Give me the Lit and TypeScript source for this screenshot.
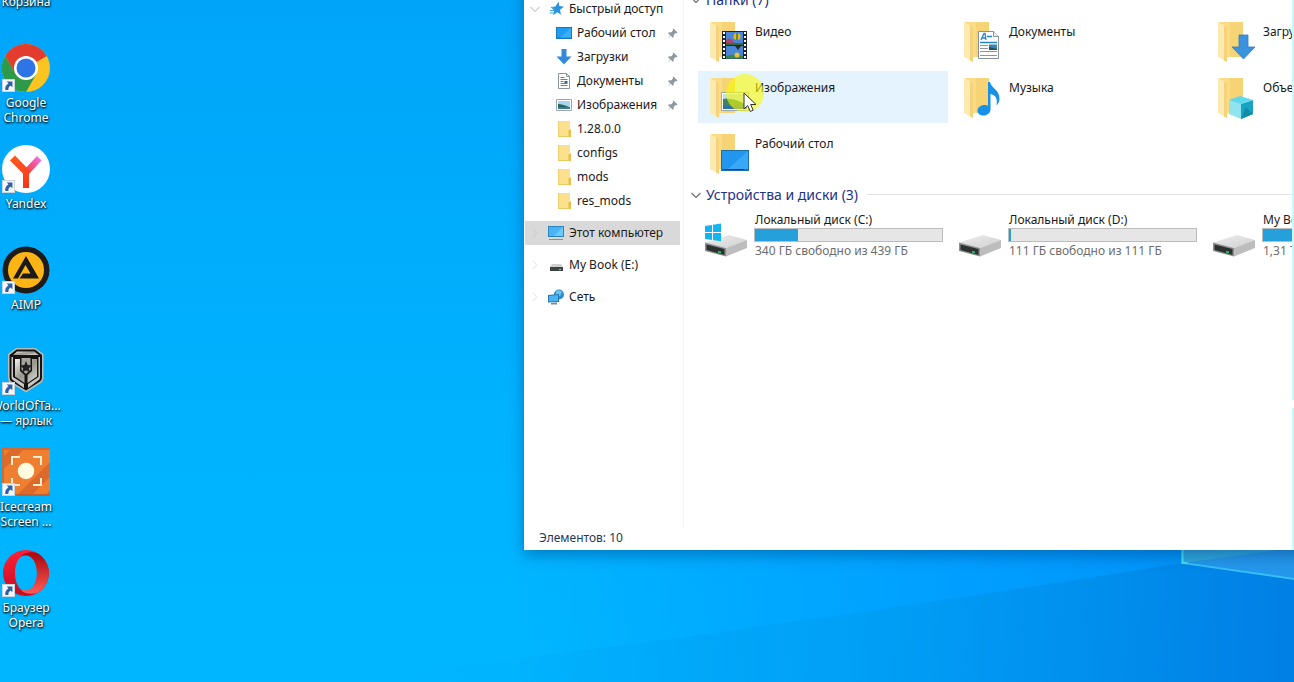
import { LitElement, html, svg, css, nothing, TemplateResult } from "lit";
import { customElement, property } from "lit/decorators.js";

type Art = TemplateResult;

const shortcutArrow = html`<svg class="arrow" viewBox="0 0 13 13" aria-hidden="true">
  <rect x=".5" y=".5" width="12" height="12" fill="#f4f6f8" stroke="#c9d4dc"/>
  <path d="M4.600 2.400h5.800v5.800L8.500 6.400C6.800 7.800 6.200 9 6.400 11H3.400C2.800 8.400 3.900 6.200 6.500 4.300z" fill="#2f5da8"/>
</svg>`;

const desktopArt: Record<string, Art> = {
  bin: html`<svg viewBox="0 0 48 48"><path d="M10 8h28l-4 36H14z" fill="#eef4f8" stroke="#9ab"/></svg>`,
  chrome: html`<svg viewBox="0 0 48 48">
    <circle cx="24" cy="24" r="24" fill="#fcc421"/>
    <path d="M24 24 3.200 12A24 24 0 0 1 44.800 12z" fill="#e33b2e"/>
    <path d="M3.200 12 13.600 30 24 24V12z" fill="#e33b2e"/>
    <path d="M3.200 12A24 24 0 0 0 24 48l10.400-18H13.600z" fill="#2c9a48"/>
    <circle cx="24" cy="24" r="12" fill="#fff"/><circle cx="24" cy="24" r="9.500" fill="#2f74e6"/>
  </svg>`,
  yandex: html`<svg viewBox="0 0 48 48">
    <defs>
      <linearGradient id="ya" x1="0" y1="0" x2="0" y2="1"><stop offset="0" stop-color="#ff5a1e"/><stop offset="1" stop-color="#f7331c"/></linearGradient>
      <linearGradient id="yb" x1="0" y1="1" x2="1" y2="0"><stop offset=".1" stop-color="#fb3f2d"/><stop offset=".6" stop-color="#f655a5"/><stop offset="1" stop-color="#e67cf5"/></linearGradient>
    </defs>
    <circle cx="24" cy="24" r="24" fill="#fff"/>
    <path d="M21 26 35 11l4.500 4.500L27 29z" fill="url(#yb)"/>
    <path d="M13 10.500 8 15.500l13 13V43h6V25z" fill="url(#ya)"/>
  </svg>`,
  aimp: html`<svg viewBox="0 0 48 48">
    <circle cx="24" cy="24" r="23.500" fill="#1d1c1a"/><circle cx="24" cy="24" r="18" fill="#fdb515"/>
    <path d="M24 10 37 32.500H17.500l3.500-5h7.500L23.500 19 16 32.500h-5z" fill="#1b1a18"/>
  </svg>`,
  tanks: html`<svg viewBox="0 0 48 48">
    <defs><linearGradient id="wt" x1="0" y1="0" x2="1" y2="1"><stop offset="0" stop-color="#f4f3ef"/><stop offset=".5" stop-color="#99968f"/><stop offset="1" stop-color="#dedcd6"/></linearGradient></defs>
    <path d="M14 1 6 7v24q0 3 2.500 5L24 45.500 39 36q2.500-2 2.500-5V7l-8-6z" fill="#b9bbb9"/>
    <path d="M14.500 2.500 7.500 8v22.500q0 2.500 2 4L24 43.500l14-9q2-1.500 2-4V8l-7-5.500z" fill="#141414"/>
    <path d="M15 4.500h17.500l4 3.500H11z" fill="url(#wt)"/>
    <path d="M9.500 10h1.500v20l11 7v4L11.500 33.500q-2-1-2-3z M38 10h-1.500v20L26 37v4l10-7.500q2-1 2-3z" fill="#c9c7c1"/>
    <path d="M13 12h5v12l4.500 4v8L13 29.500z M35 12h-5v12l-4.500 4v8l9.500-6.500z" fill="url(#wt)"/>
    <path d="M19.500 11h9v12L24 27l-4.500-4z" fill="#a5a39e"/>
    <path d="M24 14l1.700 4 4.300.4-3.200 2.900 1 4.200L24 23.300l-3.800 2.200 1-4.200-3.200-2.900 4.300-.4z" fill="#22211f"/>
  </svg>`,
  icecream: html`<svg viewBox="0 0 48 48">
    <path d="M0 0h48v48H0z" fill="#ef7e30"/>
    <path d="M10 0h13L0 23V10z M48 14v15L29 48H14z M48 42v6h-5z" fill="#dc6a2c"/>
    <path d="M0 0h48v2H2v46H0z" fill="#d36b30"/><path d="M0 46h48v2H0z" fill="#c95f28"/>
    <path d="M10 17V9h8M31 9h8v8M39 30v7h-8M18 37h-8v-7" fill="none" stroke="#fdeec9" stroke-width="2"/>
    <circle cx="24" cy="23" r="8.300" fill="#fffbe0"/>
  </svg>`,
  opera: html`<svg viewBox="0 0 48 48">
    <defs>
      <linearGradient id="oa" x1="0" y1="0" x2="0" y2="1"><stop offset="0" stop-color="#ff2038"/><stop offset="1" stop-color="#c50c20"/></linearGradient>
      <linearGradient id="ob" x1="0" y1="0" x2="0" y2="1"><stop offset="0" stop-color="#a6050e"/><stop offset="1" stop-color="#ff5a55"/></linearGradient>
    </defs>
    <path fill-rule="evenodd" d="M24 1a23 23 0 1 0 0 46 23 23 0 0 0 0-46zm0 5c7 0 11 8 11 18s-4 18-11 18-11-8-11-18S17 6 24 6z" fill="url(#oa)"/>
    <path d="M18 8c4-5 12-6 18-3.500A23 23 0 0 1 36 43.500C30 46 22 45 18 40c10 5 17-4 17-16S28 3 18 8z" fill="url(#ob)"/>
  </svg>`,
};

const smallFolder = html`<svg viewBox="0 0 16 16"><path d="M2 0h12v15H2z" fill="#fbe08d"/><path d="M2 0h1v15H2z" fill="#f1cf72"/><path d="M12.500 9l2.500-.5V16h-2.500z" fill="#e8bd4f"/><path d="M2 15h11v1H2z" fill="#ecc963"/></svg>`;

const navArt: Record<string, Art> = {
  star: html`<svg viewBox="0 0 16 16"><path d="M10.500.500 11.300 5l4.700.8-4 3 1 5L9.400 11.300l-4.400 3 1.200-5L2.500 6l5-.4z" fill="#2b93e0"/><path d="M2 9.500h4M1.500 12h4M3 6.500h3" stroke="#4aa9ea" stroke-width="1"/></svg>`,
  desktop: html`<svg viewBox="0 0 16 16"><path d="M0 2h16v12H0z" fill="#1675c4"/><path d="M1 3h14v9.500H1z" fill="#1d9cf2"/><path d="M15 3v9.500H4z" fill="#38adf8"/></svg>`,
  download: html`<svg viewBox="0 0 16 16"><path d="M5.500 0h5v7.500H15.500L8 15.500.5 7.500h5z" fill="#338ada"/></svg>`,
  doc: html`<svg viewBox="0 0 16 16"><path d="M2.500.5h8l3 3v12h-11z" fill="#fff" stroke="#8b969c"/><path d="M10.500.5v3h3" fill="none" stroke="#8b969c"/><path d="M4.500 4.500h4M4.500 6.500h7M4.500 8.500h3M4.500 10.500h7M4.500 12.500h7" stroke="#3d90c5"/><path d="M8.500 8h3v2h-3z" fill="#24688e"/></svg>`,
  picture: html`<svg viewBox="0 0 16 16"><path d="M.5 2.500h15v11H.5z" fill="#fff" stroke="#9ca5ab"/><path d="M2 4h12v8H2z" fill="#a9d6ef"/><path d="M2 7q5 0 12 3.500V12H2z" fill="#24645f"/><path d="M2 10h12v2H2z" fill="#3a78a2"/></svg>`,
  folder: smallFolder,
  computer: html`<svg viewBox="0 0 16 16"><path d="M0 1h16v11H0z" fill="#2c82bd"/><path d="M1 2h14v9H1z" fill="#48b6f5"/><path d="M15 2v9H6z" fill="#6bcaff"/><path d="M1 14h14v1H1z" fill="#7f9099"/></svg>`,
  drive: html`<svg viewBox="0 0 16 16"><path d="M4 7h9l2 3H2z" fill="#d0d0d0"/><path d="M2 10h13v4H2z" fill="#3f4443"/><path d="M11 12h2v1h-2z" fill="#75d28b"/></svg>`,
  network: html`<svg viewBox="0 0 16 16"><circle cx="11" cy="5.500" r="5" fill="#2d8fce"/><path d="M8 2q4-2 6 1l-2 4-4-1z" fill="#6ec4ea"/><path d="M0 6l11-1v8L0 13.500z" fill="#2279b5"/><path d="M1 7l9-1v6l-9 .5z" fill="#48b4f3"/><path d="M3 14l6-.5v2L3 15.500z" fill="#738c99"/></svg>`,
};

const pin = html`<svg class="pin" viewBox="0 0 12 12" aria-hidden="true"><path d="M7 .5 11.500 5l-1.200.7-.9-.3L7.200 7.600l.1 2.100-1 .9L4 8.300.5 11.500 3.500 7.800 1.200 5.600l1-.9 2.200.1 2.200-2.200-.3-.9z" fill="#8c979f"/></svg>`;

const chevron = (open: boolean, tone: string) => html`<svg class="chevron" viewBox="0 0 10 10" aria-hidden="true">
  <path d=${open ? "M.5 3l4.500 4.500L9.500 3" : "M3 1l4 4-4 4"} fill="none" stroke=${tone} stroke-width="1.200"/>
</svg>`;

const folderBase = svg`
  <path d="M5 5h24v35H5z" fill="#f9dc85"/>
  <path d="M16 5h13v35H16z" fill="#f6d476"/>
  <path d="M4 5l9 5v35l-9-5z" fill="#fdeab0"/>
  <path d="M10 8.500 13 10v35l-3-1.500z" fill="#f5d27b"/>`;

const folderArt: Record<string, unknown> = {
  video: svg`<path d="M16 14h25v28H16z" fill="#20242c"/><path d="M20 15h17v13H20zM20 29h17v12.500H20z" fill="#4a86d6"/>
    <path d="M20 23q3-3 6 0t4 5H20z" fill="#a8476b"/><path d="M20 26h17v2H20z" fill="#356b3c"/><path d="M20 39q8-3 17 0v2.500H20z" fill="#3b8644"/>
    <circle cx="31" cy="19.500" r="3.500" fill="#e9b62b"/><path d="M30 16h2v7h-2z" fill="#5d8f2a"/>
    <circle cx="31" cy="38" r="2.500" fill="#dfc63c"/><path d="M29 29h6l-3 4z" fill="#272c30"/>
    <path d="M18 15v27M39 15v27" stroke="#fff" stroke-width="2" stroke-dasharray="2 2"/>`,
  pictures: svg`<path d="M15.500 19.500h27v18h-27z" fill="#fff" stroke="#9ca8ae"/><path d="M17 21h24v15H17z" fill="#b9dff5"/>
    <path d="M17 26q9-2 24 6v4H17z" fill="#3c8564"/><path d="M17 32q12 2 24 0v4H17z" fill="#2f71a1"/>`,
  desktop: svg`<path d="M15 21h28v21H15z" fill="#1b6fab"/><path d="M16 22h26v18H16z" fill="#2196ef"/><path d="M42 22v18H22z" fill="#39a8f7"/><path d="M18 40.500h20" stroke="#153f66"/>`,
  documents: svg`<path d="M18.500 14.500h15l5 5v22h-20z" fill="#fff" stroke="#87919a"/><path d="M33.500 14.500v5h5" fill="#eef2f5" stroke="#87919a"/>
    <path d="M21 23l3-6.500h1l1 6.500M22.500 21h3.500" fill="none" stroke="#2485c9" stroke-width="1.300"/><path d="M27 19.500h5M20 25.500h17" stroke="#2485c9" stroke-width="1.300"/>
    <path d="M20 28.500h8M20 31.500h8M20 34.500h17M20 38.500h17" stroke="#8c969c"/><path d="M29 27.500h8V33h-8z" fill="#3c82b4"/><path d="M29 30l8 2v1h-8z" fill="#274e58"/>`,
  music: svg`<path d="M28 9h2c1 6 10 8 9.500 17-.2 3-1.500 5-3 6.500C38 25 35 22 30.500 21v15.500c0 3.500-3.500 6-7 6s-6-2-6-5 3.500-5.500 7-5.500c1.500 0 2.500.2 3.500.7z" fill="#1790e8"/>`,
  downloads: svg`<path d="M25 18h9v12h7L29.500 42 18 30h7z" fill="#3b93df" stroke="#2f7fc6" stroke-width=".8"/>`,
  objects: svg`<path d="M15 27l12 4v15l-12-5z" fill="#8fe4ee"/><path d="M27 31l12-4v14l-12 5z" fill="#18a2c4"/><path d="M15 27l11-4 13 4-12 4z" fill="#5fd9ef"/><path d="M27 46l12-5-7-7z" fill="#138ba8"/>`,
};

const driveArt = (system: boolean) => html`<svg viewBox="0 0 48 48" aria-hidden="true">
  <defs><linearGradient id="dt" x1="0" y1="0" x2="1" y2="1"><stop offset="0" stop-color="#eeeeee"/><stop offset="1" stop-color="#cfcfcf"/></linearGradient></defs>
  <path d="M1 29.500 25 22l18 5-21 8z" fill="url(#dt)"/>
  <path d="M22 35l21-8v8L22 43.500z" fill="#bdbdbd"/>
  <path d="M1 29.500 22 35v8.500L1 38z" fill="#8e9090"/>
  <path d="M2.500 31.500 20.500 36v6L2.500 37z" fill="#2d3130"/>
  <path d="M14 38l3 .8v1.500l-3-.8z" fill="#43cf77"/>
  ${system ? svg`<path d="M1 13l7-1v7H1zM9 11.800 17 10.500V19H9zM1 20h7v7l-7-1zM9 20h8v8.200L9 27z" fill="#12b5ef"/>` : nothing}
</svg>`;

@customElement("desktop-shortcut")
class DesktopShortcut extends LitElement {
  @property() icon = "";
  @property() label = "";

  static styles = css`
    :host { display: block; height: 101px; }
    .shortcut {
      display: flex; flex-direction: column; align-items: center; gap: 3px; width: 100%;
      padding: 0; border: 0; background: none; color: #fff;
      font: 12px/15px "Noto Sans", "Open Sans", sans-serif;
      text-shadow: 0 1px 2px rgba(0, 0, 0, .9), 1px 1px 2px rgba(0, 0, 0, .7);
    }
    .picture { position: relative; display: block; width: 48px; height: 48px; }
    .picture svg { display: block; width: 100%; height: 100%; }
    .picture .arrow { position: absolute; left: 0; bottom: 0; width: 13px; height: 13px; }
    .label { white-space: pre-line; text-align: center; }
  `;

  render() {
    return html`<button class="shortcut" type="button">
      <span class="picture">${desktopArt[this.icon]}${this.icon === "bin" ? nothing : shortcutArrow}</span>
      <span class="label">${this.label}</span>
    </button>`;
  }
}

interface NavItem { icon: string; label: string; level?: number; pinned?: boolean; open?: boolean; current?: boolean; }

const navGroups: NavItem[][] = [
  [
    { icon: "star", label: "Быстрый доступ", open: true },
    { icon: "desktop", label: "Рабочий стол", level: 1, pinned: true },
    { icon: "download", label: "Загрузки", level: 1, pinned: true },
    { icon: "doc", label: "Документы", level: 1, pinned: true },
    { icon: "picture", label: "Изображения", level: 1, pinned: true },
    { icon: "folder", label: "1.28.0.0", level: 1 },
    { icon: "folder", label: "configs", level: 1 },
    { icon: "folder", label: "mods", level: 1 },
    { icon: "folder", label: "res_mods", level: 1 },
  ],
  [{ icon: "computer", label: "Этот компьютер", current: true }],
  [{ icon: "drive", label: "My Book (E:)" }],
  [{ icon: "network", label: "Сеть" }],
];

const folders = [
  { icon: "video", label: "Видео" },
  { icon: "documents", label: "Документы" },
  { icon: "downloads", label: "Загрузки" },
  { icon: "pictures", label: "Изображения", hover: true },
  { icon: "music", label: "Музыка" },
  { icon: "objects", label: "Объемные объекты" },
  { icon: "desktop", label: "Рабочий стол" },
];

const drives = [
  { label: "Локальный диск (C:)", space: "340 ГБ свободно из 439 ГБ", used: 23, system: true },
  { label: "Локальный диск (D:)", space: "111 ГБ свободно из 111 ГБ", used: 1, system: false },
  { label: "My Book (E:)", space: "1,31 ТБ свободно из 3,63 ТБ", used: 64, system: false },
];

@customElement("explorer-window")
class ExplorerWindow extends LitElement {
  static styles = css`
    :host {
      display: flex; flex-direction: column; box-sizing: border-box; background: #fff; color: #1a1a1a;
      font: 12px/16px "Noto Sans", "Open Sans", sans-serif;
      box-shadow: -1px 0 0 #1a86cc, 0 5px 14px rgba(0, 40, 100, .4);
    }
    button { border: 0; margin: 0; background: none; color: inherit; font: inherit; text-align: left; }
    svg { display: block; flex: none; }
    .body { display: flex; flex: 1; }
    .nav { display: flex; flex: none; flex-direction: column; gap: 8px; width: 155px; padding: 13px 3px 0 1px; border-right: 1px solid #f5f5f5; }
    .group { display: flex; flex-direction: column; }
    .row { display: flex; align-items: center; height: 24px; padding: 0 2px 0 5px; white-space: nowrap; }
    .row.child { padding-left: 31px; }
    .row.current { background: #d9d9d9; }
    .row .chevron { width: 10px; height: 10px; margin-right: 8px; }
    .row .icon { width: 16px; height: 16px; margin-right: 5px; }
    .row .icon svg { width: 100%; height: 100%; }
    .row .pin { width: 11px; height: 11px; margin-left: auto; }
    .content { flex: 1; padding-left: 7px; }
    .heading {
      display: flex; align-items: center; gap: 5px; height: 31px; margin: 0;
      color: #1e3287; font-size: 14px; font-weight: 400; line-height: 20px;
    }
    .heading .chevron { width: 10px; height: 10px; }
    .heading::after { content: ""; flex: 1; height: 1px; margin-left: 4px; background: #e2e2e2; }
    .tiles { display: grid; grid-template-columns: repeat(3, 250px); gap: 4px; padding: 0 7px; }
    .tile { display: flex; width: 100%; height: 52px; padding: 2px 4px 2px 8px; box-sizing: border-box; }
    .tile.hover { background: #e5f3ff; }
    .tile > svg { width: 48px; height: 48px; margin-right: 1px; }
    .tile .name { margin-top: 7px; }
    .drive { padding: 1px 4px 0 6px; }
    .drive > svg { margin-top: 2px; margin-right: 2px; }
    .details { display: flex; flex-direction: column; flex: 1; }
    .details label { padding-left: 1px; line-height: 17px; }
    .space { padding-left: 1px; color: #6d6d6d; line-height: 18px; }
    progress { appearance: none; display: block; box-sizing: border-box; width: 189px; height: 14px; border: 1px solid #bcbcbc; background: #e6e6e6; }
    progress::-webkit-progress-bar { background: #e6e6e6; }
    progress::-webkit-progress-value { background: #26a0da; }
    .status { padding: 2px 15px 4px; color: #1e395b; }
  `;

  private row(item: NavItem) {
    const kind = `row ${item.level ? "child" : ""} ${item.current ? "current" : ""}`;
    return html`<button type="button" class=${kind}>
      ${item.level ? nothing : chevron(!!item.open, item.open || item.current ? "#cfcfcf" : "#ebebeb")}
      <span class="icon">${navArt[item.icon]}</span>
      <span>${item.label}</span>
      ${item.pinned ? pin : nothing}
    </button>`;
  }

  render() {
    return html`
      <div class="body">
        <nav class="nav">${navGroups.map((g) => html`<div class="group">${g.map((i) => this.row(i))}</div>`)}</nav>
        <main class="content">
          <h2 class="heading">${chevron(true, "#6f6f6f")}Папки (7)</h2>
          <div class="tiles">
            ${folders.map((f) => html`<button type="button" class="tile ${f.hover ? "hover" : ""}">
              <svg viewBox="0 0 48 48" aria-hidden="true">${folderBase}${folderArt[f.icon]}</svg>
              <span class="name">${f.label}</span>
            </button>`)}
          </div>
          <h2 class="heading">${chevron(true, "#6f6f6f")}Устройства и диски (3)</h2>
          <div class="tiles">
            ${drives.map((d, i) => html`<div class="tile drive">
              ${driveArt(d.system)}
              <div class="details">
                <label for="drive-${i}">${d.label}</label>
                <progress id="drive-${i}" max="100" value=${d.used}></progress>
                <span class="space">${d.space}</span>
              </div>
            </div>`)}
          </div>
        </main>
      </div>
      <footer class="status">Элементов: 10</footer>`;
  }
}

const shortcuts = [
  { icon: "bin", label: "Корзина" },
  { icon: "chrome", label: "Google\nChrome" },
  { icon: "yandex", label: "Yandex" },
  { icon: "aimp", label: "AIMP" },
  { icon: "tanks", label: "WorldOfTa...\n— ярлык" },
  { icon: "icecream", label: "Icecream\nScreen ..." },
  { icon: "opera", label: "Браузер\nOpera" },
];

@customElement("app-root")
class AppRoot extends LitElement {
  static styles = css`
    :host { display: block; }
    .desktop { position: relative; min-height: 100vh; overflow: hidden; background: #00a8fb; }
    .wallpaper { position: absolute; width: 100%; height: 100%; }
    .shortcuts { position: relative; width: 76px; margin: -57px 0 0 -12px; }
    .window { position: absolute; left: 524px; top: -16px; width: 934px; height: 566px; }
    .edge { position: absolute; right: 0; top: 0; width: 2px; height: 550px; background: linear-gradient(#c4fbff 400px, #fff 400px, #fff 408px, #c4fbff 408px); }
    .halo { position: absolute; left: 726px; top: 74px; width: 38px; height: 38px; border-radius: 50%; background: rgba(250, 250, 0, .6); }
    .pointer { position: absolute; left: 743px; top: 92px; width: 14px; height: 21px; }
  `;

  render() {
    return html`<div class="desktop">
      <svg class="wallpaper" viewBox="0 0 1294 682" preserveAspectRatio="none" aria-hidden="true">
        <defs>
          <linearGradient id="base" x1="0" y1="0" x2="0" y2="1"><stop offset="0" stop-color="#00a5f9"/><stop offset=".65" stop-color="#00b3ff"/><stop offset="1" stop-color="#00b7ff"/></linearGradient>
          <linearGradient id="right" x1="0" y1="0" x2="1" y2="0"><stop offset=".4" stop-color="#009cff" stop-opacity="0"/><stop offset=".75" stop-color="#009cff" stop-opacity=".9"/><stop offset="1" stop-color="#008ef5"/></linearGradient>
          <linearGradient id="beam" gradientUnits="userSpaceOnUse" x1="400" y1="600" x2="1294" y2="650"><stop offset="0" stop-color="#00a8f5" stop-opacity="0"/><stop offset=".5" stop-color="#009ff3" stop-opacity=".7"/><stop offset="1" stop-color="#007fe4"/></linearGradient>
        </defs>
        <path d="M0 0h1294v682H0z" fill="url(#base)"/>
        <path d="M0 0h1294v682H0z" fill="url(#right)"/>
        <path d="M330 682 Q800 625 1182 563l112 16v103z" fill="url(#beam)"/>
        <path d="M1182 540h112v39l-112-16z" fill="#2497ea"/>
        <path d="M1182 540h112v8l-112 15z" fill="#2fa9dc"/>
        <path d="M1182.500 540v23l112 16" fill="none" stroke="#34bff5" stroke-width="2"/>
        <path d="M1182.500 540v23h5" fill="none" stroke="#43e0f0" stroke-width="2"/>
      </svg>
      <div class="shortcuts">
        ${shortcuts.map((s) => html`<desktop-shortcut icon=${s.icon} label=${s.label}></desktop-shortcut>`)}
      </div>
      <explorer-window class="window"></explorer-window>
      <div class="edge"></div>
      <div class="halo"></div>
      <svg class="pointer" viewBox="0 0 14 21" aria-hidden="true"><path d="M1 1v16l3.700-3.500 2.600 6 2.900-1.300-2.600-5.700H13z" fill="#fff" stroke="#333" stroke-width="1"/></svg>
    </div>`;
  }
}
